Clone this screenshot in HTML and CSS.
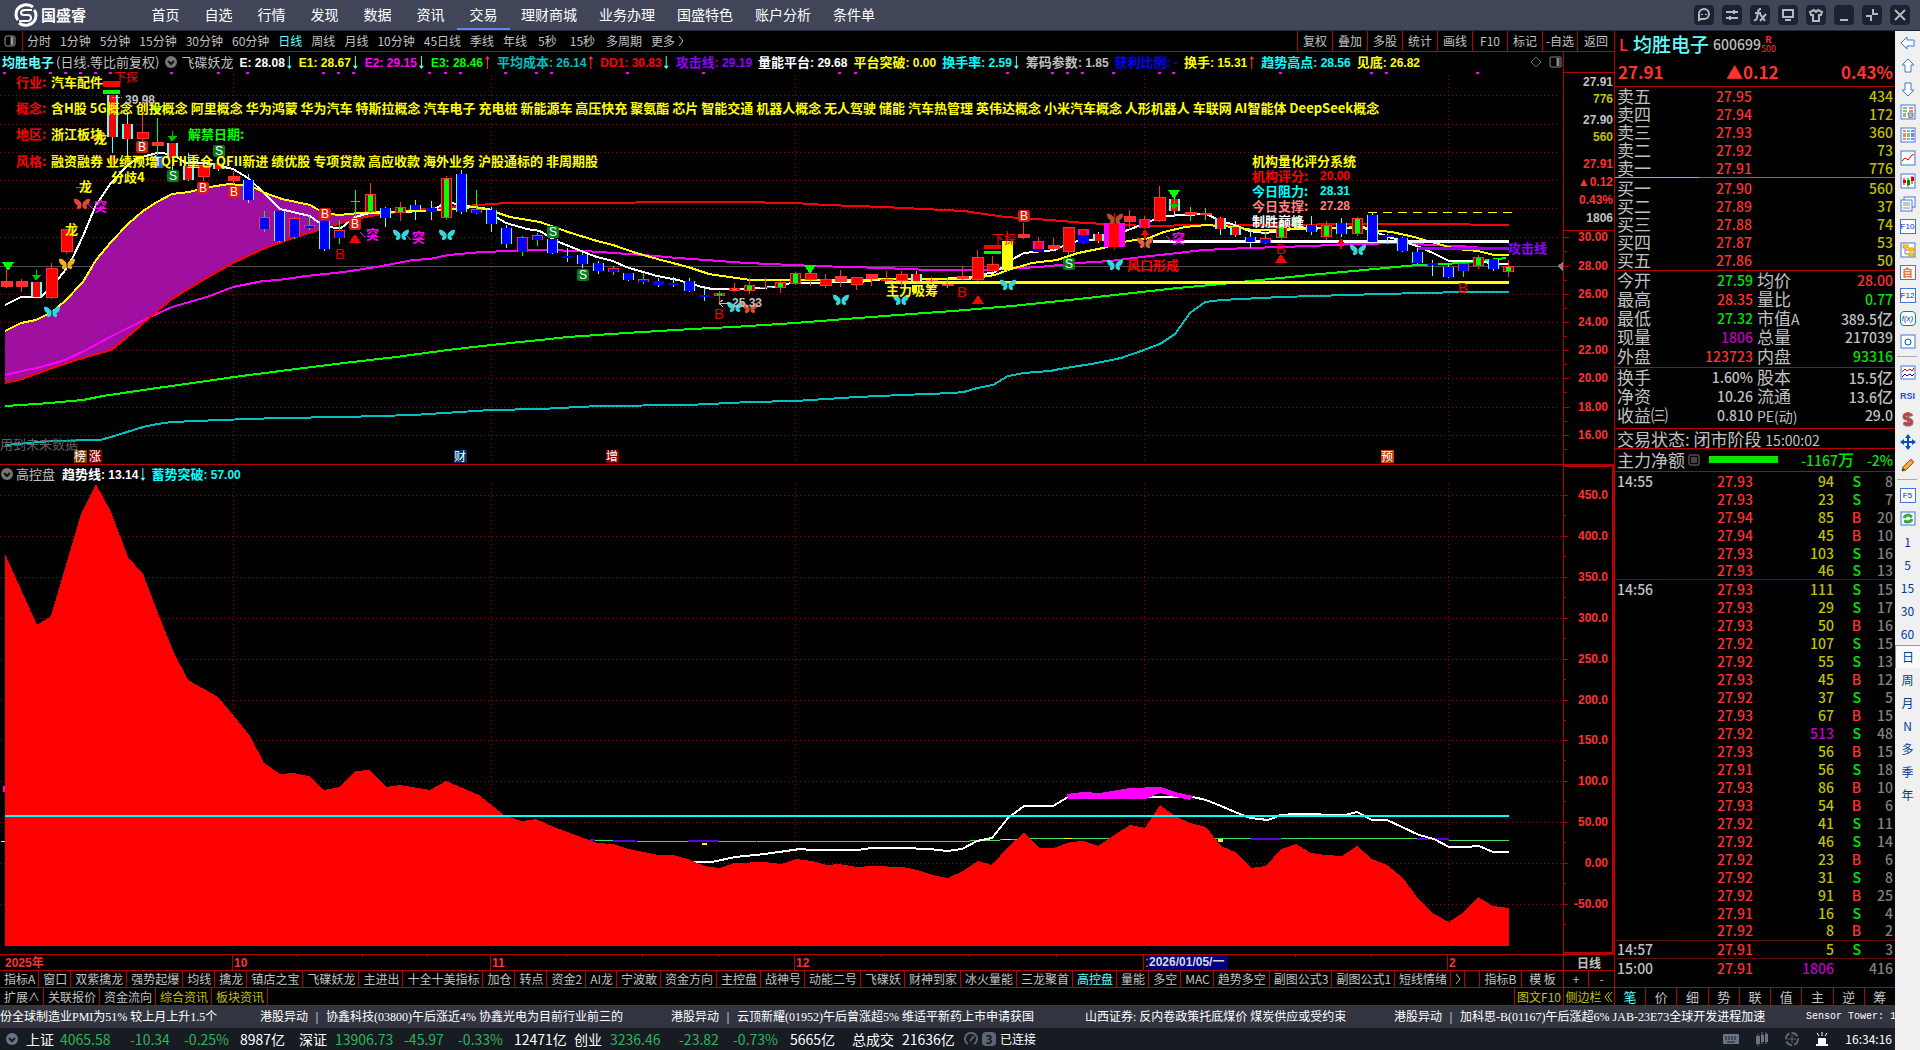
FILE: index.html
```html
<!DOCTYPE html>
<html lang="zh-CN">
<head>
<meta charset="utf-8">
<title>国盛睿 - 均胜电子 600699</title>
<link rel="stylesheet" href="styles.css">
</head>
<body>
<header class="topbar">
  <div class="brand">
    <svg class="brand-mark" viewBox="0 0 24 24" width="24" height="24" aria-hidden="true">
      <g fill="none" stroke="#fff">
        <path d="M19 4 Q15 1 10 2 Q2 4 2 12 Q2 15 4 17" stroke-width="3"/>
        <path d="M5 20 Q9 23 14 22 Q22 20 22 12 Q22 9 20 7" stroke-width="3"/>
        <path d="M18 7 H11 Q7 7 7 10 Q7 12 10 12 H14 Q17 12 17 15 Q17 18 13 18 H5" stroke-width="2"/>
      </g>
    </svg>
    <span>国盛睿</span>
  </div>
  <nav class="mainnav">
    <a href="#">首页</a><a href="#">自选</a><a href="#">行情</a><a href="#">发现</a><a href="#">数据</a><a href="#">资讯</a><a href="#" class="on">交易</a><a href="#">理财商城</a><a href="#">业务办理</a><a href="#">国盛特色</a><a href="#">账户分析</a><a href="#">条件单</a>
  </nav>
  <div class="winbtns">
    <button aria-label="客服"><svg viewBox="0 0 20 20"><path d="M5 15V9a5 5 0 1 1 5 5H7z"/><path d="M8 9v1M12 9v1"/></svg></button>
    <button aria-label="切换"><svg viewBox="0 0 20 20"><path d="M4 7h12M4 13h12M12 5v4M8 11v4"/></svg></button>
    <button aria-label="公式"><svg viewBox="0 0 20 20"><path d="M11 4Q8 4 8 8L7 13Q6 16 4 15M5 8h6M10 9l5 7M16 9l-6 7"/></svg></button>
    <button aria-label="屏幕"><svg viewBox="0 0 20 20"><path d="M5 5h10v7H5zM7 15h6"/></svg></button>
    <button aria-label="皮肤"><svg viewBox="0 0 20 20"><path d="M8 5L4 7l1 3h2v6h6v-6h2l1-3-4-2-2 2z"/></svg></button>
    <button aria-label="最小化"><svg viewBox="0 0 20 20"><path d="M6 15h8"/></svg></button>
    <button aria-label="还原"><svg viewBox="0 0 20 20"><path d="M4 11h5v5M16 9h-5V4"/></svg></button>
    <button aria-label="关闭"><svg viewBox="0 0 20 20"><path d="M5 5l10 10M15 5L5 15"/></svg></button>
  </div>
</header>

<div class="workspace">
<main class="terminal">
  <div class="market">
    <section class="charts">
      <div class="periods">
        <button class="fold" aria-label="折叠"><svg viewBox="0 0 12 12" width="12" height="12"><rect x="1" y="1" width="10" height="10" rx="2" fill="none" stroke="#999"/><path d="M8 2v8" stroke="#999" stroke-width="3"/></svg></button>
        <div class="period-list">
          <a href="#">分时</a><a href="#">1分钟</a><a href="#">5分钟</a><a href="#">15分钟</a><a href="#">30分钟</a><a href="#">60分钟</a><a href="#" class="on">日线</a><a href="#">周线</a><a href="#">月线</a><a href="#">10分钟</a><a href="#">45日线</a><a href="#">季线</a><a href="#">年线</a><a href="#" class="roomy">5秒</a><a href="#" class="roomy">15秒</a><a href="#">多周期</a><a href="#">更多 <svg viewBox="0 0 6 10" width="6" height="10"><path d="M1 0l4 5-4 5" fill="none" stroke="#c0c0c0"/></svg></a>
        </div>
        <div class="tools">
          <button>复权</button><button>叠加</button><button>多股</button><button>统计</button><button>画线</button><button>F10</button><button>标记</button><button>-自选</button><button class="last">返回</button>
        </div>
      </div>

      <div class="pane pane-main">
        <div class="plot">
          <div class="legend">
            <span class="k cyan2">均胜电子</span><span class="plain">(日线.等比前复权)</span>
            <svg class="drop" viewBox="0 0 12 12" width="12" height="12"><circle cx="6" cy="6" r="6" fill="#777"/><path d="M3 5l3 3 3-3" fill="none" stroke="#111" stroke-width="2"/></svg>
            <span class="plain name">飞碟妖龙</span>
            <span class="ind white">E: 28.08<i class="dn"></i></span>
            <span class="ind yellow">E1: 28.67<i class="dn"></i></span>
            <span class="ind magenta">E2: 29.15<i class="dn"></i></span>
            <span class="ind green">E3: 28.46<i class="up"></i></span>
            <span class="ind teal"><span class="k">平均成本</span>: 26.14<i class="up"></i></span>
            <span class="ind red">DD1: 30.83<i class="dn"></i></span>
            <span class="ind violet"><span class="k">攻击线</span>: 29.19</span>
            <span class="ind white"><span class="k">量能平台</span>: 29.68</span>
            <span class="ind yellow"><span class="k">平台突破</span>: 0.00</span>
            <span class="ind cyan"><span class="k">换手率</span>: 2.59<i class="dn"></i></span>
            <span class="ind gray"><span class="k">筹码参数</span>: 1.85</span>
            <span class="ind blue"><span class="k">获利比例</span>: -</span>
            <span class="ind yellow"><span class="k">换手</span>: 15.31<i class="up"></i></span>
            <span class="ind cyan"><span class="k">趋势高点</span>: 28.56</span>
            <span class="ind yellow"><span class="k">见底</span>: 26.82</span>
            <svg class="corner" viewBox="0 0 34 14" width="34" height="14"><path d="M7 2l5 5-5 5-5-5z" fill="none" stroke="#666"/><rect x="21" y="2" width="11" height="10" rx="1" fill="none" stroke="#888"/><path d="M29 3v8" stroke="#888" stroke-width="3"/></svg>
          </div>
          <svg id="kline" class="canvas" viewBox="0 72 1563 392" preserveAspectRatio="none"></svg>
        </div>
        <svg id="klineAxis" class="axis" viewBox="1564 52 50 412" preserveAspectRatio="none"></svg>
      </div>

      <div class="pane pane-sub">
        <div class="plot">
          <div class="legend sub">
            <svg class="drop" viewBox="0 0 12 12" width="12" height="12"><circle cx="6" cy="6" r="6" fill="#777"/><path d="M3 5l3 3 3-3" fill="none" stroke="#111" stroke-width="2"/></svg>
            <span class="plain">高控盘</span>
            <span class="ind white"><span class="k">趋势线</span>: 13.14<i class="dn"></i></span>
            <span class="ind cyan"><span class="k">蓄势突破</span>: 57.00</span>
          </div>
          <svg id="control" class="canvas" viewBox="0 482 1563 472" preserveAspectRatio="none"></svg>
        </div>
        <svg id="controlAxis" class="axis" viewBox="1564 465 50 489" preserveAspectRatio="none"></svg>
      </div>

      <div class="timebar">
        <svg id="timeAxis" class="canvas" viewBox="0 955 1563 15" preserveAspectRatio="none"></svg>
        <span class="timeunit">日线</span>
      </div>

      <div class="tabs">
        <button>指标A</button><button>窗口</button><button>双紫擒龙</button><button>强势起爆</button><button>均线</button><button>擒龙</button><button>镇店之宝</button><button>飞碟妖龙</button><button>主进出</button><button>十全十美指标</button><button>加仓</button><button>转点</button><button>资金2</button><button>AI龙</button><button>宁波敢</button><button>资金方向</button><button>主控盘</button><button>战神号</button><button>动能二号</button><button>飞碟妖</button><button>财神到家</button><button>冰火量能</button><button>三龙聚首</button><button class="on">高控盘</button><button>量能</button><button>多空</button><button>MAC</button><button>趋势多空</button><button>副图公式3</button><button>副图公式1</button><button>短线情绪</button><button aria-label="更多指标"><svg viewBox="0 0 6 10" width="6" height="10"><path d="M1 0l4 5-4 5" fill="none" stroke="#c0c0c0"/></svg></button>
        <span class="fill"></span>
        <button class="w42">指标B</button><button class="w42">模 板</button><button class="w25">+</button><button class="w25 end">-</button>
      </div>
      <div class="tabs links">
        <button>扩展∧</button><button>关联报价</button><button>资金流向</button><button class="gold">综合资讯</button><button class="gold">板块资讯</button>
        <span class="fill"></span>
        <button class="gold f10">图文F10</button><button class="gold end side">侧边栏<svg viewBox="0 0 9 10" width="9" height="10"><path d="M5 0L1 5l4 5M8 0L4 5l4 5" fill="none" stroke="#c0c000"/></svg></button>
      </div>
    </section>

    <aside class="quote">
      <div class="q-title"><span class="lv">L</span><strong>均胜电子</strong><span class="code">600699</span><span class="flag"><b>R</b><span>500</span></span></div>
      <div class="q-price"><span>27.91</span><span>▲0.12</span><span>0.43%</span></div>
      <table class="book">
        <tbody>
        <tr><th>卖五</th><td class="p">27.95</td><td class="v">434</td></tr>
        <tr><th>卖四</th><td class="p">27.94</td><td class="v">172</td></tr>
        <tr><th>卖三</th><td class="p">27.93</td><td class="v">360</td></tr>
        <tr><th>卖二</th><td class="p">27.92</td><td class="v">73</td></tr>
        <tr><th>卖一</th><td class="p">27.91</td><td class="v">776</td></tr>
        </tbody>
      </table>
      <div class="ratio"><span></span></div>
      <table class="book bids">
        <tbody>
        <tr><th>买一</th><td class="p">27.90</td><td class="v">560</td></tr>
        <tr><th>买二</th><td class="p">27.89</td><td class="v">37</td></tr>
        <tr><th>买三</th><td class="p">27.88</td><td class="v">74</td></tr>
        <tr><th>买四</th><td class="p">27.87</td><td class="v">53</td></tr>
        <tr><th>买五</th><td class="p">27.86</td><td class="v">50</td></tr>
        </tbody>
      </table>
      <table class="stats">
        <tbody>
        <tr><th>今开</th><td class="dnc">27.59</td><th>均价</th><td class="upc">28.00</td></tr>
        <tr><th>最高</th><td class="upc">28.35</td><th>量比</th><td class="dnc">0.77</td></tr>
        <tr><th>最低</th><td class="dnc">27.32</td><th>市值<small>A</small></th><td>389.5<big>亿</big></td></tr>
        <tr><th>现量</th><td class="big">1806</td><th>总量</th><td>217039</td></tr>
        <tr><th>外盘</th><td class="upc">123723</td><th>内盘</th><td class="dnc">93316</td></tr>
        </tbody>
      </table>
      <table class="stats second">
        <tbody>
        <tr><th>换手</th><td>1.60%</td><th>股本</th><td>15.5<big>亿</big></td></tr>
        <tr><th>净资</th><td>10.26</td><th>流通</th><td>13.6<big>亿</big></td></tr>
        <tr><th>收益㈢</th><td>0.810</td><th><small>PE(动)</small></th><td>29.0</td></tr>
        </tbody>
      </table>
      <div class="q-state">交易状态: 闭市阶段 <span>15:00:02</span></div>
      <div class="q-net"><span class="lbl">主力净额</span><svg viewBox="0 0 12 12" width="12" height="12"><rect x="1" y="1" width="10" height="10" rx="1" fill="none" stroke="#777"/><path d="M3 4h6M3 6h6M3 8h6" stroke="#888"/></svg><span class="bar"></span><span class="amt">-1167<big>万</big></span><span class="pct">-2%</span></div>
      <div class="tickbox"><table class="ticks"><tbody id="ticks"></tbody></table></div>
      <div class="q-tabs"><button class="on">笔</button><button>价</button><button>细</button><button>势</button><button>联</button><button>值</button><button>主</button><button>逆</button><button>筹</button></div>
    </aside>
  </div>

  <div class="ticker">
    <span class="cut">份全球制造业PMI为51% 较上月上升1.5个</span>
    <span>港股异动<i>|</i>协鑫科技(03800)午后涨近4% 协鑫光电为目前行业前三的</span>
    <span>港股异动<i>|</i>云顶新耀(01952)午后曾涨超5% 维适平新药上市申请获国</span>
    <span>山西证券: 反内卷政策托底煤价 煤炭供应或受约束</span>
    <span>港股异动<i>|</i>加科思-B(01167)午后涨超6% JAB-23E73全球开发进程加速</span>
    <span class="latin">Sensor Tower: 1</span>
  </div>

  <footer class="status">
    <svg class="chev" viewBox="0 0 12 12" width="12" height="12"><circle cx="6" cy="6" r="6" fill="#6a7388"/><path d="M3 5l3 3 3-3" fill="none" stroke="#171c22" stroke-width="2"/></svg>
    <div class="indices">
      <b>上证</b><span>4065.58</span><span>-10.34</span><span>-0.25%</span><b>8987亿</b>
      <b>深证</b><span>13906.73</span><span>-45.97</span><span>-0.33%</span><b>12471亿</b>
      <b>创业</b><span>3236.46</span><span>-23.82</span><span>-0.73%</span><b>5665亿</b>
      <b>总成交</b><b>21636亿</b>
    </div>
    <div class="conn">
      <svg viewBox="0 0 14 14" width="14" height="14"><path d="M4 12A6 6 0 1 1 10 12M6 9l4-5" fill="none" stroke="#5c6475" stroke-width="2"/></svg>
      <span class="num">3</span><span>已连接</span>
    </div>
    <div class="sysicons">
      <svg viewBox="0 0 16 12" width="16" height="12"><rect y="1" width="16" height="10" rx="1" fill="#6a7388"/><path d="M2 4h12M2 6h12" stroke="#171c22" stroke-dasharray="2 1"/><path d="M4 9h8" stroke="#171c22"/></svg>
      <svg viewBox="0 0 14 14" width="14" height="14"><path d="M3 2v12M7 0v12M11 0v12" stroke="#6a7388"/><path d="M1 4h4v8H1zM6 3h3v7H6zM10 2h3v8h-3z" fill="#6a7388"/></svg>
      <svg viewBox="0 0 14 14" width="14" height="14"><circle cx="7" cy="7" r="6" fill="none" stroke="#5c6475" stroke-width="2" stroke-dasharray="7 2"/><path d="M7 3v8M3 7h8" stroke="#5c6475"/></svg>
      <svg viewBox="0 0 14 14" width="14" height="14"><path d="M3 12V7q0-1 1-1h6q1 0 1 1v5zM1 12h12v2H1z" fill="#fff"/><path d="M7 0v4M2 1l2 3M12 1l-2 3" stroke="#fff"/></svg>
      <time>16:34:16</time>
    </div>
  </footer>
</main>

<aside class="toolbox">
  <button aria-label="后退"><svg viewBox="0 0 16 16"><path class="arw" d="M1 8l6-6v3h7v6H7v3z"/></svg></button>
  <button aria-label="上"><svg viewBox="0 0 16 16"><path class="arw" d="M8 1l6 6h-3v7H5V7H2z"/></svg></button>
  <button aria-label="下"><svg viewBox="0 0 16 16"><path class="arw" d="M8 15l6-6h-3V2H5v7H2z"/></svg></button>
  <button aria-label="报价"><svg viewBox="0 0 16 16"><rect class="frm" x="1" y="1" width="14" height="14"/><path d="M3 4h4M3 7h4" stroke="#080"/><path d="M9 4h4M9 7h4" stroke="#d00"/><path d="M3 10h3M3 12h3" stroke="#080"/><path d="M8 9h5v4l-4 1z" fill="#bbb" stroke="#777"/></svg></button>
  <button aria-label="列表"><svg viewBox="0 0 16 16"><rect class="frm" x="1" y="1" width="14" height="14"/><path d="M3 4h3M3 7h3M3 9h3M3 12h3" stroke="#d00"/><path d="M7 4h3M7 7h3M7 9h3M7 12h3" stroke="#080"/><path d="M11 4h3M11 7h3M11 9h3M11 12h3" stroke="#00c"/></svg></button>
  <button aria-label="走势"><svg viewBox="0 0 16 16"><rect class="frm" x="1" y="1" width="14" height="14"/><path d="M2 11l3-3 3 2 3-4 3-2" fill="none" stroke="#d00"/></svg></button>
  <button aria-label="K线"><svg viewBox="0 0 16 16"><rect class="frm" x="1" y="1" width="14" height="14"/><path d="M4 5v7M12 3v8" stroke="#d00"/><path d="M8 5v9" stroke="#080"/><path d="M3 7h3v3H3zM11 4h3v4h-3z" fill="#d00"/><path d="M7 7h3v5H7z" fill="#080"/></svg></button>
  <button aria-label="多窗"><svg viewBox="0 0 16 16"><rect class="frm" x="4" y="1" width="11" height="10"/><rect class="frm" x="1" y="4" width="11" height="11"/><path d="M3 7h7M3 9h7M3 12h7" stroke="#888"/></svg></button>
  <button><span class="key">F10</span></button>
  <button aria-label="板块树"><svg viewBox="0 0 16 16"><rect class="frm" x="1" y="1" width="14" height="14"/><path d="M5 6v6h4M5 8h4" fill="none" stroke="#888"/><path d="M3 3h5v3H3zM9 6h5v3H9zM9 11h5v3H9z" fill="#fc4" stroke="#e90"/></svg></button>
  <button><span class="key self">自</span></button>
  <button><span class="key">F12</span></button>
  <button><span class="key fx">f(x)</span></button>
  <button aria-label="圆"><svg viewBox="0 0 16 16"><rect class="frm" x="1" y="1" width="14" height="13"/><circle cx="8" cy="8" r="3" fill="none" stroke="#05a"/></svg></button>
  <hr>
  <button aria-label="指标"><svg viewBox="0 0 16 16"><rect class="frm" x="1" y="1" width="14" height="13"/><path d="M2 7l3-3 2 2 3-2 2 2 2-3" fill="none" stroke="#d00"/><path d="M2 12l3-3 2 2 3-2 2 2 2-2" fill="none" stroke="#00c"/></svg></button>
  <button><span class="rsi">RSI</span></button>
  <button aria-label="资金"><svg viewBox="0 0 16 16"><path d="M12 5Q11 3 8 3 4 3 4 6q0 2 4 2 4 1 4 3 0 3-4 3-3 0-4-2M8 1v14" fill="none" stroke="#777" stroke-width="3"/><path d="M11 5Q10 3 8 3 4 3 4 5q0 2 4 3 3 1 3 3 0 2-3 2-3 0-4-2" fill="none" stroke="#d33" stroke-width="2"/></svg></button>
  <button aria-label="移动"><svg viewBox="0 0 16 16"><path d="M8 0l3 4H5zM8 16l3-4H5zM0 8l4-3v6zM16 8l-4-3v6z" fill="#05b"/><path d="M8 3v10M3 8h10" stroke="#05b" stroke-width="2"/></svg></button>
  <button aria-label="画笔"><svg viewBox="0 0 16 16"><path d="M2 14l1-4 8-8 3 3-8 8z" fill="#f3a83a" stroke="#8a5a20"/><path d="M10 3l3 3 1-1-3-3z" fill="#e66"/><path d="M2 14l1-3 2 2z" fill="#333"/></svg></button>
  <hr>
  <button><span class="key">F5</span></button>
  <button aria-label="刷新"><svg viewBox="0 0 16 16"><rect class="frm" x="1" y="1" width="14" height="13"/><path d="M4 7q1-3 5-3l3 2M12 8q-1 3-5 3L4 10" fill="none" stroke="#3a4" stroke-width="3"/></svg></button>
  <button>1</button><button>5</button><button>15</button><button>30</button><button>60</button><button class="on">日</button><button>周</button><button>月</button><button>N</button><button>多</button><button>季</button><button>年</button>
</aside>
</div>
<script src="chart.js"></script>
</body>
</html>
```
FILE: styles.css
```css
:root {
  --line: #b40000;
  --text: #c0c0c0;
  --up: #ff3232;
  --down: #00e600;
  --vol: #c0c000;
  --cyan: #5cffff;
  --cjk: "Noto Sans CJK SC", sans-serif;
}
* { box-sizing: border-box; }
body {
  margin: 0;
  min-height: 100vh;
  display: flex;
  flex-direction: column;
  background: #000;
  color: var(--text);
  font: 12px/16px var(--cjk);
  overflow-x: hidden;
}
button {
  margin: 0;
  padding: 0;
  border: 0;
  background: none;
  color: inherit;
  font: inherit;
  white-space: nowrap;
}
a { color: inherit; text-decoration: none; white-space: nowrap; }
table { border-collapse: collapse; width: 100%; }
th, td { padding: 0; font-weight: 400; }
svg { display: block; flex: none; }

/* top bar */
.topbar {
  height: 31px;
  display: flex;
  align-items: center;
  background: #404658;
  border-bottom: 1px solid #22263a;
  color: #fff;
}
.brand {
  width: 139px;
  padding-left: 14px;
  display: flex;
  align-items: center;
  gap: 3px;
  font-size: 15px;
  font-weight: 700;
}
.mainnav { display: flex; flex: 1; align-self: stretch; font-size: 14px; }
.mainnav a {
  min-width: 53px;
  padding: 0 11px;
  text-align: center;
  line-height: 29px;
}
.mainnav .on { box-shadow: inset 0 -2px #5b86ff; }
.winbtns { display: flex; gap: 8px; padding-right: 10px; }
.winbtns button { width: 20px; height: 20px; border-radius: 4px; background: #1d2230; }
.winbtns svg { width: 20px; height: 20px; fill: none; stroke: #b4b8c0; stroke-width: 2; }

/* frame */
.workspace { flex: 1; display: flex; }
.terminal { flex: 1; min-width: 0; display: flex; flex-direction: column; }
.market { flex: 1; display: flex; }
.charts { flex: 1; min-width: 0; display: flex; flex-direction: column; }

.periods {
  height: 21px;
  display: flex;
  align-items: stretch;
  border-bottom: 1px solid var(--line);
  line-height: 20px;
}
.fold { width: 23px; padding-left: 4px; border-right: 1px solid var(--line); }
.period-list { flex: 1; display: flex; gap: 9px; padding-left: 4px; }
.period-list svg { display: inline-block; }
.period-list .roomy { padding: 0 2px; }
.period-list .on, .tabs .on, .q-tabs .on { color: var(--cyan); }
.tools { display: flex; }
.tools button { width: 35px; border-left: 1px solid var(--line); }
.tools .last { width: 37px; }

.pane { display: flex; border-bottom: 1px solid var(--line); }
.pane-main { flex: 413 0 413px; }
.pane-sub { flex: 490 0 490px; }
.plot { flex: 1; min-width: 0; display: flex; flex-direction: column; }
.canvas { flex: 1 1 0; min-height: 0; width: 100%; }
.axis { width: 51px; height: 100%; border-left: 1px solid var(--line); }

.legend {
  height: 20px;
  display: flex;
  align-items: baseline;
  gap: 6px;
  padding-left: 2px;
  font: 700 12px/20px "Liberation Sans", var(--cjk);
  white-space: nowrap;
}
.legend.sub { height: 17px; padding-left: 1px; line-height: 17px; gap: 5px; }
.legend svg { align-self: center; }
.legend .k { font-size: 13px; }
.legend .plain { font-weight: 400; font-size: 13px; font-family: var(--cjk); margin-left: -4px; }
.legend .drop + .plain { margin-left: -2px; }
.legend.sub .plain { margin-right: 2px; }
.legend i { display: inline-block; width: 5px; height: 13px; margin: 0 1px 0 2px; vertical-align: -2px; background: currentColor; }
.legend .dn { background: var(--cyan); clip-path: polygon(40% 0, 60% 0, 60% 75%, 100% 75%, 50% 100%, 0 75%, 40% 75%); }
.legend .up { background: var(--up); clip-path: polygon(50% 0, 100% 25%, 60% 25%, 60% 100%, 40% 100%, 40% 25%, 0 25%); }
.legend .corner { margin-left: auto; }
.white { color: #fff; }
.yellow { color: #ff0; }
.magenta { color: #f0f; }
.green { color: #0f0; }
.teal { color: #00c0c0; }
.red { color: #f00; }
.violet { color: #9000ff; }
.cyan { color: #0ff; }
.cyan2 { color: var(--cyan); }
.gray { color: #c0c0c0; }
.blue { color: #00f; }

.timebar { height: 16px; display: flex; border-bottom: 1px solid var(--line); }
.timebar .canvas { height: 15px; }
.timeunit { width: 51px; border-left: 1px solid var(--line); text-align: center; font-weight: 700; line-height: 15px; }

.tabs { height: 17px; display: flex; border-bottom: 1px solid var(--line); line-height: 16px; }
.tabs button { height: 16px; padding: 0 3px 0 4px; border-right: 1px solid var(--line); }
.tabs .fill { flex: 1; border-right: 1px solid var(--line); }
.tabs .w42 { width: 42px; padding: 0; }
.tabs .w25 { width: 25px; padding: 0; }
.tabs .end { border-right: 0; }
.links { height: 18px; line-height: 17px; }
.links button { height: 17px; }
.links .gold { color: var(--vol); }
.links .f10 { width: 49px; padding: 0; }
.links .side { width: 50px; padding: 0; display: flex; align-items: center; justify-content: center; gap: 2px; }

/* quote panel */
.quote {
  width: 281px;
  display: flex;
  flex-direction: column;
  border-left: 1px solid var(--line);
  font: 500 14px/18px var(--cjk);
}
.quote td { font-weight: 500; }
.q-title { height: 26px; display: flex; align-items: center; padding-left: 4px; }
.q-title .lv { width: 14px; color: var(--up); font-size: 16px; }
.q-title strong { color: var(--cyan); font-size: 19px; font-weight: 500; margin-right: 4px; }
.flag { display: flex; flex-direction: column; align-items: center; color: var(--up); font-size: 9px; line-height: 9px; }
.flag span { font-weight: 400; }
.q-price {
  height: 30px;
  padding: 0 2px 0 3px;
  display: flex;
  justify-content: space-between;
  align-items: center;
  border-bottom: 1px solid var(--line);
  color: var(--up);
  font-size: 17px;
  font-weight: 700;
}
.book { table-layout: fixed; }
.book th, .stats th { text-align: left; padding-left: 2px; font-size: 17px; color: var(--text); }
.book tr { height: 18px; }
.book .p { width: 80px; color: var(--up); text-align: right; }
.book .v { width: 143px; color: var(--vol); text-align: right; padding-right: 2px; }
.ratio { height: 1px; background: #3a80c0; }
.ratio span { display: block; width: 30%; height: 1px; background: #e0a030; }
.bids { margin: 1px 0; }
.stats { table-layout: fixed; border-top: 1px solid var(--line); }
.stats tr { height: 19px; }
.stats td { text-align: right; padding-right: 2px; }
.stats th:first-child { width: 60px; }
.stats th:first-child + td { width: 80px; }
.stats th + td + th { width: 58px; }
.stats small { font-size: 14px; }
.quote big { font-size: 16px; }
.stats .upc { color: var(--up); }
.stats .dnc { color: var(--down); }
.stats .big { color: #c000c0; }
.second { margin-bottom: 3px; margin-top: 1px; }
.q-state { height: 21px; padding-left: 2px; border-top: 1px solid var(--line); border-bottom: 1px solid var(--line); font-size: 17px; font-weight: 400; line-height: 19px; }
.q-state span { font-size: 14px; }
.q-net { height: 23px; display: flex; align-items: center; padding: 0 2px; border-bottom: 1px solid var(--line); color: var(--down); }
.q-net .lbl { color: var(--text); font-size: 17px; margin-right: 3px; font-weight: 400; }
.q-net .bar { width: 25%; height: 7px; margin-left: 9px; background: var(--down); }
.q-net .amt { margin-left: auto; }
.q-net .pct { width: 39px; text-align: right; }
.tickbox { flex: 1; padding-left: 2px; }
.ticks { table-layout: fixed; }
.ticks tr { height: 18px; }
.ticks .gap td { border-bottom: 1px dotted var(--line); line-height: 17px; }
.ticks td { text-align: right; color: #808080; padding-right: 2px; }
.ticks td.t { width: 55px; text-align: left; color: var(--text); }
.ticks td.p { width: 83px; color: var(--up); }
.ticks td.n { width: 81px; color: var(--vol); }
.ticks td.large { color: #c000c0; }
.ticks td.d { width: 27px; }
.ticks td.s { color: var(--down); }
.ticks td.b { color: var(--up); }
.q-tabs { height: 19px; display: flex; border-top: 1px solid var(--line); border-bottom: 1px solid var(--line); font: 400 13px/17px var(--cjk); }
.q-tabs button { flex: 1; border-right: 1px solid var(--line); }
.q-tabs button:last-child { border-right: 0; }

/* bottom strips */
.ticker {
  height: 22px;
  display: grid;
  grid-template-columns: 260px 411px 414px 309px 412px 1fr;
  background: #32353f;
  color: #fff;
  font: 12px/22px "Liberation Serif", var(--cjk);
  white-space: nowrap;
  overflow: hidden;
}
.ticker span { overflow: hidden; }
.ticker i { display: inline-block; width: 18px; text-align: center; font-style: normal; }
.ticker .latin { font-family: "Liberation Mono", monospace; font-size: 10px; }
.status { height: 22px; display: flex; align-items: center; background: #171c22; color: #fff; }
.chev { margin: 0 8px 0 6px; }
.indices {
  display: grid;
  grid-template-columns: 34px 70px 54px 56px 59px 36px 69px 54px 56px 60px 36px 69px 54px 57px 62px 50px 62px;
  font-size: 14px;
  line-height: 22px;
  white-space: nowrap;
}
.indices b { font-weight: 400; }
.indices span { color: #2fb457; }
.conn { display: flex; align-items: center; gap: 4px; line-height: 22px; }
.conn .num { width: 14px; height: 14px; border-radius: 4px; background: #5c6475; color: #171c22; text-align: center; line-height: 14px; font-weight: 700; }
.sysicons { margin-left: auto; padding-right: 3px; display: flex; align-items: center; gap: 16px; }

/* right tool strip */
.toolbox { width: 25px; display: flex; flex-direction: column; background: #f0f0f0; color: #003c94; }
.toolbox button { height: 23px; width: 25px; display: flex; align-items: center; justify-content: center; line-height: 22px; }
.toolbox svg { width: 16px; height: 16px; }
.toolbox .on { background: #fafafa; border-left: 1px solid #999; border-top: 1px solid #999; }
.toolbox hr { height: 1px; width: 20px; margin: 3px 2px 4px; border: 0; background: #aaa; }
.arw { fill: #fff; stroke: #3c78d8; }
.frm { fill: #fff; stroke: #3c78d8; }
.key { width: 16px; height: 15px; border: 1px solid #3c78d8; background: #fff; font: 8px/13px "Liberation Sans", sans-serif; color: #0032b4; text-align: center; }
.key.self { font: 700 11px/12px var(--cjk); color: #f07030; }
.key.fx { border-radius: 4px; border-color: #088; font-style: italic; }
.rsi { font: 700 9px/12px "Liberation Sans", sans-serif; color: #2850c8; }

/* chart drawing */
.crisp { shape-rendering: crispEdges; }
.t14 { font: 400 15px "Liberation Sans", sans-serif; }
.t13 { font: 700 13px var(--cjk); }
.t12 { font: 700 12px "Liberation Sans", var(--cjk); }
.reg { font-weight: 400; }
```
FILE: chart.js
```js
const NS = 'http://www.w3.org/2000/svg';
const RED = '#ff0000', EDGE = '#ff3232', BLUE = '#0000ff', CYAN = '#5cffff', GREEN = '#00ff00', GRID = '#a00000', AX = '#b40000';

function add(host, tag, attrs, text) {
  const e = document.createElementNS(NS, tag);
  for (const k in attrs) e.setAttribute(k, attrs[k]);
  if (text !== undefined) e.textContent = text;
  host.appendChild(e);
  return e;
}
const line = (h, x1, y1, x2, y2, c, w = 1, dash) =>
  add(h, 'path', Object.assign({ d: `M${x1} ${y1}L${x2} ${y2}`, stroke: c, 'stroke-width': w, class: 'crisp' }, dash ? { 'stroke-dasharray': dash } : {}));
const rect = (h, x, y, w, ht, c) => add(h, 'rect', { x, y, width: w, height: ht, fill: c, class: 'crisp' });
const poly = (h, p, c, w = 2) => add(h, 'polyline', { points: p, fill: 'none', stroke: c, 'stroke-width': w, class: 'crisp' });
const area = (h, p, c) => add(h, 'polygon', { points: p, fill: c, class: 'crisp' });
const label = (h, x, cy, s, c, cls = 't13', anchor = 'start') =>
  add(h, 'text', { x, y: cy + (cls.startsWith('t12') ? 4 : 5), fill: c, class: cls, 'text-anchor': anchor }, s);

const months = [233, 491, 795, 1144, 1448];
const xAt = i => Math.round(5.5 + i * 15.18);

/* ---------- price pane ---------- */
const k = document.getElementById('kline');
[95, 124, 152, 180, 208, 237, 266, 294, 322, 350, 378, 407, 435].forEach(y => line(k, 0, y + .5, 1560, y + .5, GRID, 1, '1 3'));
months.forEach(x => line(k, x + .5, 75, x + .5, 462, GRID, 1, '1 3'));
line(k, 0, 266.5, 1558, 266.5, '#505050');
area(k, '1563,262 1557,266 1563,271', '#808080');
[4, 50, 65, 80, 95, 110, 171, 218, 247, 323, 338, 353, 429, 445, 460, 505, 536, 551, 627, 703, 839, 855, 1007, 1052, 1067, 1082, 1113, 1159, 1173, 1280, 1371, 1386, 1477]
  .forEach(x => rect(k, x - 1, 72, 3, 2, '#f0f'));

const yellow = '5,331 21,323 36,320 52,312 65,301 83,282 96,260 111,242 128,224 143,211 157,202 172,194 189,192 210,187 229,184 251,186 265,193 282,199 310,205 324,213 339,215 370,212';
const yellowRest = ' 427,211 475,207 492,211 510,217 540,222 568,232 597,241 613,245 636,253 661,260 688,267 709,274 729,277 751,280 791,280 864,280 884,279 967,279 995,275 1008,270 1032,263 1057,260 1078,253 1103,248 1128,241 1146,239 1164,232 1185,227 1206,225 1235,227 1253,230 1303,229 1364,227 1371,230 1392,232 1414,237 1435,243 1456,249 1478,251 1494,255 1509,255';
const redLine = '5,383 22,379 52,368 83,358 111,350 120,343 138,328 150,317 172,299 203,280 233,263 265,248 296,237 325,228 355,219 382,214';
area(k, yellow + ' 382,214 ' + redLine.split(' ').reverse().join(' '), '#a010a0');
poly(k, '5,445 52,441 100,440 111,437 143,427 157,424 172,422 220,420 279,418 344,417 413,415 491,410 540,409 599,406 688,405 750,402 795,401 857,397 902,395 953,393 964,392 977,388 993,385 1008,376 1024,373 1050,371 1060,369 1097,363 1121,358 1144,350 1160,344 1175,334 1190,313 1205,302 1221,300 1281,297 1381,294 1464,292 1509,292', '#00c0c0');
poly(k, '5,406 21,405 50,403 83,400 103,396 157,388 207,381 234,377 296,369 344,363 396,357 448,350 491,345 540,340 568,337 626,333 692,329 733,327 795,323 884,316 953,311 1012,306 1060,301 1106,296 1142,292 1178,288 1221,284 1260,280 1310,275 1364,270 1417,265 1464,263 1506,258', GREEN);
poly(k, '5,375 22,371 41,367 65,360 86,350 110,337 150,317 172,307 207,297 233,287 263,281 279,280 306,276 344,272 382,266 413,260 430,259 448,255 482,252 540,250 585,251 643,255 678,258 747,263 815,266 884,268 929,270 988,270 1039,267 1078,263 1110,261 1142,257 1178,253 1203,250 1249,248 1281,247 1310,246 1356,244 1403,243 1431,245 1478,247', '#f0f');
poly(k, redLine + ' 413,210 465,206 506,203 540,203 733,202 795,203 826,205 884,207 964,211 1005,217 1050,220 1085,223 1106,224 1146,226 1203,225 1431,224 1509,225', RED);
poly(k, '5,305 21,297 41,297 55,283 66,269 73,257 83,236 96,205 111,183 128,165 138,158 157,153 172,154 186,163 207,163 233,169 248,178 264,193 280,209 310,216 325,227 341,228 355,217 370,213 427,211 437,208 447,201 458,205 489,209 496,217 506,223 527,229 540,231 554,240 581,251 597,257 613,261 626,267 657,276 678,280 702,287 712,289 747,289 774,287 791,283 860,282 884,279 929,279 967,278 982,274 993,273 1003,267 1013,259 1024,253 1055,250 1067,244 1078,241 1103,239 1128,230 1151,221 1164,216 1206,214 1221,221 1235,225 1249,231 1265,233 1283,231 1296,228 1364,228 1389,237 1417,246 1433,253 1449,261 1478,261 1497,264 1508,264', '#fff');
poly(k, yellow + yellowRest, '#ff0');
line(k, 885, 282.5, 1509, 282.5, '#ff0', 3);
line(k, 1153, 241.5, 1509, 241.5, '#fff', 3);
line(k, 1417, 248.5, 1509, 248.5, '#9000ff', 3);
line(k, 1368, 212.5, 1513, 212.5, '#ff0', 1, '9 6');

/* index, kind, body top, body bottom, high, low */
const bars = [
  [0,'r',281,287,270,287],[1,'r',281,287,279,291],[2,'c',282,297,282,297],[3,'r',268,298,263,298],[4,'r',229,252,229,253],[5,'r',187,188,187,188],[6,'r',138,139,138,139],
  [7,'c',95,137,95,152],[8,'c',124,139,112,155],[9,'r',132,139,100,140],[10,'w',142,146,118,154],[11,'c',143,158,143,169],[12,'c',166,180,153,180],[13,'r',165,177,163,180],
  [14,'c',163,169,153,170],[15,'r',176,181,171,183],[16,'b',180,200,174,202],[17,'o',217,229,211,231],[18,'b',211,241,211,241],[19,'o',218,237,217,238],[20,'o',225,228,216,229],
  [21,'b',221,249,221,250],[22,'o',230,238,220,243],[23,'t',201,202,190,216],[24,'g',194,212,183,212],[25,'b',208,218,207,226],[26,'g',207,213,202,220],[27,'b',205,210,200,219],
  [28,'b',208,212,201,219],[29,'g',178,218,176,219],[30,'b',174,212,170,213],[31,'o',209,213,190,213],[32,'b',210,224,207,231],[33,'b',228,244,225,247],[34,'o',237,252,236,255],
  [35,'o',235,240,233,245],[36,'b',239,253,238,253],[37,'b',256,258,248,261],[38,'b',255,264,253,267],[39,'b',263,271,261,273],[40,'o',268,272,266,274],[41,'b',273,280,273,280],
  [42,'o',279,282,273,283],[43,'b',281,285,278,286],[44,'b',283,285,277,286],[45,'b',281,291,278,291],[46,'b',295,297,288,300],[47,'g',293,296,291,304],[48,'g',288,291,283,291],
  [49,'g',285,291,278,293],[50,'r',287,288,278,288],[51,'g',282,288,281,292],[52,'g',273,284,272,284],[53,'r',273,280,273,285],[54,'r',279,286,274,287],[55,'r',276,282,270,286],
  [56,'r',277,285,277,289],[57,'r',274,279,274,285],[58,'r',279,281,271,281],[59,'r',274,281,271,285],[60,'c',274,281,271,281],[61,'r',280,281,277,281],[62,'w',284,286,278,287],
  [63,'r',276,279,266,279],[64,'r',257,280,250,280],[65,'r',264,271,256,271],[66,'y',241,270,231,270],[67,'r',234,238,223,238],[68,'m',241,249,237,252],[69,'r',245,249,238,249],
  [70,'r',227,252,227,254],[71,'m',229,235,229,243],[72,'c',234,241,232,242],[73,'M',223,247,213,249],[74,'r',216,222,210,228],[75,'m',219,228,216,228],[76,'r',197,221,186,221],
  [77,'c',199,211,198,216],[78,'w',212,215,207,220],[79,'w',213,215,208,219],[80,'c',218,229,217,234],[81,'c',227,235,221,236],[82,'b',237,242,229,247],[83,'o',238,243,232,243],
  [84,'g',222,238,221,239],[85,'t',218,225,216,227],[86,'b',225,232,216,234],[87,'g',225,237,221,239],[88,'b',223,234,218,236],[89,'g',218,234,217,235],[90,'b',215,242,212,243],
  [91,'b',235,237,234,243],[92,'b',238,251,237,251],[93,'b',252,263,248,263],[94,'b',263,265,260,275],[95,'b',267,277,263,277],[96,'o',263,271,262,276],[97,'g',257,266,255,268],
  [98,'b',259,269,259,270],[99,'g',266,272,260,276]
];
const wicks = { r: EDGE, g: EDGE, y: RED, m: EDGE, M: RED, b: CYAN, c: CYAN, o: GREEN, w: GREEN, t: GREEN };
bars.forEach(([i, kind, t, b, hi, lo]) => {
  const x = xAt(i), h = b - t;
  rect(k, x, hi, 1, lo - hi + 1, wicks[kind]);
  if (kind === 'r' || kind === 'w') { rect(k, x - 5, t, 12, h, EDGE); if (h > 6) rect(k, x - 4, t + 1, 10, h - 2, RED); }
  else if (kind === 'b') {
    if (h > 4) { rect(k, x - 5, t, 11, h, CYAN); rect(k, x - 4, t, 9, h, BLUE); }
    else rect(k, x - 5, t, 11, h, BLUE);
  }
  else if (kind === 'o') { rect(k, x - 5, t, 11, h, EDGE); rect(k, x - 4, t + 1, 9, h - 1, BLUE); }
  else if (kind === 'g') { rect(k, x - 5, t, 11, h, EDGE); rect(k, x - 4, t + 1, 9, h - 2, '#900'); rect(k, x - 2, t + 1, 5, Math.max(h - 2, 1), GREEN); }
  else if (kind === 't') { rect(k, x - 4, t, 9, h, GREEN); }
  else if (kind === 'c') { rect(k, x - 5, t, 11, h, CYAN); rect(k, x - 3, t, 7, h, RED); }
  else if (kind === 'y') { rect(k, x - 5, t, 11, h, '#ff0'); }
  else if (kind === 'm') { rect(k, x - 5, t, 11, h, '#f0f'); rect(k, x - 3, t + 1, 7, h - 1, RED); if (lo > b) rect(k, x - 5, b, 11, lo - b, BLUE); }
  else if (kind === 'M') { rect(k, x - 10, t, 21, h, '#f0f'); rect(k, x - 5, t, 10, h, RED); }
});
rect(k, 103, 81, 17, 6, RED); rect(k, 103, 90, 17, 4, GREEN);
rect(k, 984, 245, 17, 4, RED); rect(k, 984, 251, 17, 3, GREEN);
rect(k, 912, 285, 5, 7, '#ff0');

/* signal markers */
[[8, 262], [157, 106], [810, 265], [1174, 190]].forEach(([x, y]) => area(k, `${x - 6},${y} ${x + 6},${y} ${x},${y + 9}`, GREEN));
[[355, 234], [978, 295], [1281, 254]].forEach(([x, y]) => area(k, `${x},${y} ${x - 6},${y + 9} ${x + 6},${y + 9}`, RED));
[[112, 154], [1145, 229], [1341, 238]].forEach(([x, y]) => { area(k, `${x},${y} ${x - 4},${y + 6} ${x + 4},${y + 6}`, RED); rect(k, x - 1, y + 5, 2, 6, RED); });
[[36, 270], [172, 131], [1174, 199]].forEach(([x, y]) => { rect(k, x, y, 1, 6, '#00c000'); area(k, `${x - 4},${y + 5} ${x + 5},${y + 5} ${x},${y + 11}`, '#00c000'); });
[[82, 204, '#e04830'], [67, 264, '#f0b020'], [52, 312, '#30d8e0'], [401, 235, '#30d8e0'], [447, 235, '#30d8e0'], [735, 307, '#30d8e0'], [750, 308, '#e04830'], [841, 300, '#30d8e0'], [901, 300, '#30d8e0'], [1008, 285, '#30d8e0'], [1115, 219, '#c04830'], [1145, 243, '#e06040'], [1115, 265, '#30d8e0'], [1358, 250, '#30d8e0']]
  .forEach(([x, y, c]) => {
    add(k, 'path', { transform: `translate(${x} ${y})`, fill: c, d: 'M0 0C-2-4-6-6-8-5-8-1-6 1-4 1-6 3-5 6-3 5-1 4 0 3 0 1 0 3 1 4 3 5 5 6 6 3 4 1 6 1 8-1 8-5 6-6 2-4 0 0Z' });
    add(k, 'path', { transform: `translate(${x} ${y})`, fill: 'none', stroke: '#201010', d: 'M0-2V4' });
  });
[[142, 147, 'B'], [203, 188, 'B'], [234, 192, 'B'], [325, 214, 'B'], [355, 224, 'B'], [1024, 216, 'B'], [173, 176, 'S'], [219, 151, 'S'], [553, 232, 'S'], [583, 275, 'S'], [1069, 264, 'S'], [158, 162, 'T']]
  .forEach(([x, y, s]) => {
    add(k, 'rect', { x: x - 6, y: y - 6, width: 12, height: 12, rx: 2, fill: { B: '#d02010', S: '#0a7a1a', T: '#3060d0' }[s] });
    label(k, x, y, s, '#fff', 't12 reg', 'middle');
  });
[[340, 254], [719, 314], [962, 292], [1281, 249], [1463, 288]].forEach(([x, y]) => label(k, x, y, 'B', '#e00000', 't14', 'middle'));
[[94, 206], [366, 234], [412, 237], [1172, 238]].forEach(([x, y]) => {
  poly(k, `${x - 1},${y + 3} ${x - 6},${y - 2}`, '#f0f', 1);
  label(k, x, y, '突', '#f0f', 't13');
});

/* annotations */
[['行业:', 82], ['概念:', 108], ['地区:', 134], ['风格:', 161]].forEach(([s, y]) => label(k, 16, y, s, RED));
label(k, 51, 82, '汽车配件', '#ff0');
label(k, 51, 108, '含H股 5G概念 创投概念 阿里概念 华为鸿蒙 华为汽车 特斯拉概念 汽车电子 充电桩 新能源车 高压快充 聚氨酯 芯片 智能交通 机器人概念 无人驾驶 储能 汽车热管理 英伟达概念 小米汽车概念 人形机器人 车联网 AI智能体 DeepSeek概念', '#ff0');
label(k, 51, 134, '浙江板块', '#ff0');
label(k, 188, 134, '解禁日期:', GREEN);
label(k, 51, 161, '融资融券 业绩预增 QFII重仓 QFII新进 绩优股 专项贷款 高应收款 海外业务 沪股通标的 非周期股', '#ff0');
label(k, 114, 78, '下探', RED, 't12 reg');
label(k, 992, 240, '下探', RED, 't12 reg');
line(k, 112, 97.5, 122, 97.5, '#c0c0c0', 1, '2 1');
label(k, 125, 100, '39.98', '#c0c0c0', 't12');
line(k, 719, 303.5, 730, 303.5, '#c0c0c0');
poly(k, '723,300 719,303 723,307', '#c0c0c0', 1);
label(k, 732, 303, '25.33', '#c0c0c0', 't12');
label(k, 111, 177, '分歧4', '#ff0', 't13');
[[79, 186], [94, 138], [65, 229]].forEach(([x, y]) => label(k, x, y, '龙', '#ff0', 't13'));
label(k, 886, 290, '主力吸筹', '#ff0', 't13');
label(k, 1127, 265, '风口形成', RED);
label(k, 1508, 248, '攻击线', '#9000ff');
label(k, 1252, 161, '机构量化评分系统', '#ff0');
[['机构评分:', '20.00', 176, RED], ['今日阻力:', '28.31', 191, '#0ff'], ['今日支撑:', '27.28', 206, '#ff8080']].forEach(([s, v, y, c]) => {
  label(k, 1252, y, s, c);
  label(k, 1320, y, v, c, 't12');
});
label(k, 1252, 221, '制胜巅峰', '#fff');
label(k, 0, 444, '用到未来数据', '#606060', 't13 reg');
[[74, '榜', '#804000'], [89, '涨', '#800000'], [454, '财', '#003060'], [606, '增', '#800000'], [1381, '预', '#c04000']].forEach(([x, s, c]) => {
  rect(k, x, 450, 13, 13, c);
  label(k, x + 6, 457, s, '#fff', 't12 reg', 'middle');
});

/* price axis */
const ka = document.getElementById('klineAxis');
line(ka, 1564, 72.5, 1614, 72.5, AX);
line(ka, 1564, 230.5, 1614, 230.5, AX);
[['27.91', 82, '#c0c0c0'], ['776', 99, '#c0c000'], ['27.90', 120, '#c0c0c0'], ['560', 137, '#c0c000'], ['27.91', 164, EDGE], ['▲0.12', 182, EDGE], ['0.43%', 200, EDGE], ['1806', 218, '#c0c0c0']]
  .forEach(([s, y, c]) => label(ka, 1613, y, s, c, 't12', 'end'));
[237, 266, 294, 322, 350, 378, 407, 435].forEach((y, n) => {
  line(ka, 1564, y + .5, 1569, y + .5, AX);
  line(ka, 1564, y + 14.5, 1567, y + 14.5, AX);
  label(ka, 1608, y, (30 - 2 * n) + '.00', EDGE, 't12', 'end');
});

/* ---------- control pane ---------- */
const c = document.getElementById('control');
const levels = [495, 536, 577, 618, 659, 700, 740, 781, 822, 863, 904];
levels.forEach(y => line(c, 0, y + .5, 1563, y + .5, GRID, 1, '1 3'));
months.forEach(x => line(c, x + .5, 484, x + .5, 952, GRID, 1, '1 3'));
poly(c, '590,840 636,841 719,842 757,841 970,841 1030,839 1221,838 1395,838 1449,840 1509,840', '#40e060', 1);
[[590, 595, 840], [613, 636, 841], [688, 719, 841], [1251, 1281, 839], [1417, 1449, 839]].forEach(([a, b, y]) => line(c, a, y, b, y, '#6000e0', 2));
poly(c, '694,862 712,862 735,857 765,854 800,849 812,850 857,850 872,848 902,848 929,849 948,851 962,849 977,841 992,838 1008,818 1024,806 1053,806 1068,797 1193,797 1206,800 1221,806 1235,812 1250,818 1268,820 1281,815 1296,814 1345,815 1357,812 1372,820 1387,820 1402,827 1419,835 1434,839 1449,847 1465,847 1479,846 1493,852 1509,852', '#fff');
area(c, '1067,794 1083,792 1100,793 1130,788 1160,787 1175,792 1193,796 1190,800 1175,797 1160,793 1146,799 1100,799 1068,799', '#f0f');
area(c, '5,946 5,554 37,625 51,616 81,514 96,484 111,512 128,557 143,574 159,616 174,653 188,680 218,697 234,716 250,736 264,763 280,774 293,773 309,776 324,790 339,787 355,771 370,770 386,787 400,785 430,790 446,781 479,795 504,815 522,821 536,819 554,827 597,843 613,844 628,849 658,855 673,855 688,859 704,866 719,868 735,863 765,862 781,864 796,859 812,861 827,865 839,864 857,867 872,866 902,867 917,870 932,875 948,878 963,871 978,861 992,865 1008,847 1024,833 1039,848 1054,848 1070,842 1083,841 1098,846 1113,836 1130,825 1145,828 1160,805 1175,816 1190,823 1206,827 1221,846 1235,852 1251,868 1266,866 1281,849 1296,844 1311,853 1326,855 1342,856 1357,846 1372,859 1387,865 1403,878 1419,900 1434,914 1449,922 1464,912 1478,897 1493,906 1509,908 1509,946', RED);
line(c, 5, 816, 1509, 816, '#0ff', 2);
rect(c, 702, 843, 5, 2, '#ff0'); rect(c, 1003, 839, 8, 1, '#ff0'); rect(c, 1064, 838, 8, 1, '#ff0'); rect(c, 1218, 839, 5, 3, '#ff0');
rect(c, 3, 786, 2, 6, '#f0f'); rect(c, 1, 841, 4, 1, '#ff0');

const ca = document.getElementById('controlAxis');
line(ca, 1564, 466, 1614, 466, AX, 2);
line(ca, 1613, 465, 1613, 954, AX, 2);
line(ca, 1564, 953, 1614, 953, AX, 2);
['450.0', '400.0', '350.0', '300.0', '250.0', '200.0', '150.0', '100.0', '50.00', '0.00', '-50.00'].forEach((s, n) => {
  line(ca, 1564, levels[n] + .5, 1568, levels[n] + .5, AX);
  line(ca, 1564, levels[n] + 20.5, 1566, levels[n] + 20.5, AX);
  label(ca, 1608, levels[n], s, EDGE, 't12', 'end');
});

/* time axis */
const ta = document.getElementById('timeAxis');
label(ta, 5, 963, '2025年', EDGE, 't12');
months.forEach((x, n) => {
  line(ta, x - .5, 955, x - .5, 970, AX);
  label(ta, x + 1, 963, ['10', '11', '12', '1', '2'][n], EDGE, 't12');
});
[297, 362, 427, 566, 642, 718, 881, 969, 1056, 1220, 1295, 1371].forEach(x => line(ta, x + .5, 955, x + .5, 957, AX));
rect(ta, 1148, 955, 80, 15, '#000080');
label(ta, 1149, 962, '2026/01/05/一', '#d8d8d8', 't12');

/* ---------- trade ticks ---------- */
const trades = [
  ['14:55', '27.93', 94, 'S', 8], ['', '27.93', 23, 'S', 7], ['', '27.94', 85, 'B', 20], ['', '27.94', 45, 'B', 10], ['', '27.93', 103, 'S', 16], ['', '27.93', 46, 'S', 13],
  ['14:56', '27.93', 111, 'S', 15], ['', '27.93', 29, 'S', 17], ['', '27.93', 50, 'B', 16], ['', '27.92', 107, 'S', 15], ['', '27.92', 55, 'S', 13], ['', '27.93', 45, 'B', 12],
  ['', '27.92', 37, 'S', 5], ['', '27.93', 67, 'B', 15], ['', '27.92', 513, 'S', 48], ['', '27.93', 56, 'B', 15], ['', '27.91', 56, 'S', 18], ['', '27.93', 86, 'B', 10],
  ['', '27.93', 54, 'B', 6], ['', '27.92', 41, 'S', 11], ['', '27.92', 46, 'S', 14], ['', '27.92', 23, 'B', 6], ['', '27.92', 31, 'S', 8], ['', '27.92', 91, 'B', 25],
  ['', '27.91', 16, 'S', 4], ['', '27.92', 8, 'B', 2], ['14:57', '27.91', 5, 'S', 3], ['15:00', '27.91', 1806, '', 416]
];
document.getElementById('ticks').innerHTML = trades.map(([t, p, n, d, q], i) => {
  const gap = trades[i + 1] && trades[i + 1][0] ? ' class="gap"' : '';
  return `<tr${gap}><td class="t">${t}</td><td class="p">${p}</td><td class="n${n > 500 ? ' large' : ''}">${n}</td><td class="d ${d.toLowerCase()}">${d}</td><td>${q}</td></tr>`;
}).join('');
```
